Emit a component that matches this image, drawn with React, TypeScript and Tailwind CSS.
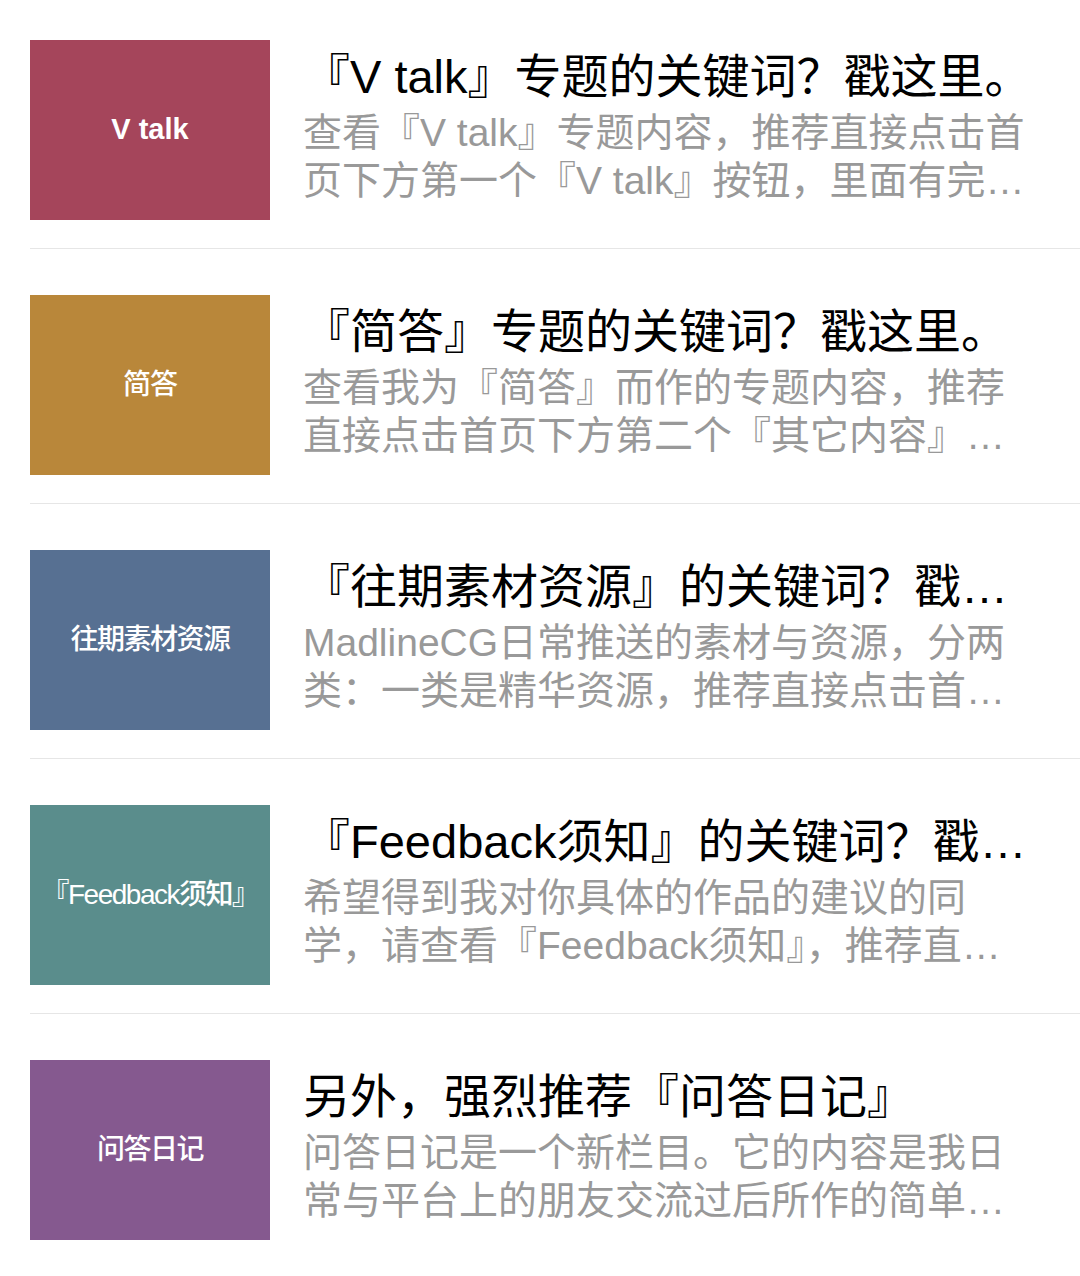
import React from 'react';

interface TopicItem {
  label: string;
  color: string;
  labelClass: string;
  title: string;
  desc: string;
}

const items: TopicItem[] = [
  {
    label: 'V talk',
    color: 'bg-[#a5455b]',
    labelClass: 'text-[29px] font-bold',
    title: '『V talk』专题的关键词？戳这里。',
    desc: '查看『V talk』专题内容，推荐直接点击首页下方第一个『V talk』按钮，里面有完整的专题内容。',
  },
  {
    label: '简答',
    color: 'bg-[#b9873a]',
    labelClass: 'text-[28px] font-medium tracking-[-1px]',
    title: '『简答』专题的关键词？戳这里。',
    desc: '查看我为『简答』而作的专题内容，推荐直接点击首页下方第二个『其它内容』按钮。',
  },
  {
    label: '往期素材资源',
    color: 'bg-[#577092]',
    labelClass: 'text-[28px] font-medium tracking-[-1.5px]',
    title: '『往期素材资源』的关键词？戳这里。',
    desc: 'MadlineCG日常推送的素材与资源，分两类：一类是精华资源，推荐直接点击首页下方按钮。',
  },
  {
    label: '『Feedback须知』',
    color: 'bg-[#5a8d8c]',
    labelClass: 'text-[28px] font-medium tracking-[-1.5px]',
    title: '『Feedback须知』的关键词？戳这里。',
    desc: '希望得到我对你具体的作品的建议的同学，请查看『Feedback须知』，推荐直接点击首页下方按钮。',
  },
  {
    label: '问答日记',
    color: 'bg-[#85598f]',
    labelClass: 'text-[28px] font-medium tracking-[-1.5px]',
    title: '另外，强烈推荐『问答日记』',
    desc: '问答日记是一个新栏目。它的内容是我日常与平台上的朋友交流过后所作的简单记录。',
  },
];

function TopicRow({ item, last }: { item: TopicItem; last: boolean }) {
  return (
    <div
      className={`ml-[30px] flex items-start gap-[33px] pt-[46px] pb-[28px] pr-[44px] ${
        last ? '' : 'border-b border-[#e6e6e6]'
      }`}
    >
      <div className={`w-[240px] h-[180px] shrink-0 flex items-center justify-center ${item.color}`}>
        <span className={`text-white whitespace-nowrap ${item.labelClass}`}>{item.label}</span>
      </div>
      <div className="flex-1 min-w-0 pt-[9px]">
        <h2 className="text-[47px] leading-[56px] font-normal text-black truncate">{item.title}</h2>
        <p className="mt-[4px] text-[39px] leading-[48px] text-[#999999] line-clamp-2">{item.desc}</p>
      </div>
    </div>
  );
}

export default function App() {
  return (
    <div
      className="w-[1080px] h-[1276px] bg-white overflow-hidden"
      style={{ fontFamily: '"Liberation Sans", "Noto Sans CJK SC", sans-serif' }}
    >
      <div className="-mt-[6px]">
        {items.map((item, i) => (
          <TopicRow key={item.label} item={item} last={i === items.length - 1} />
        ))}
      </div>
    </div>
  );
}
